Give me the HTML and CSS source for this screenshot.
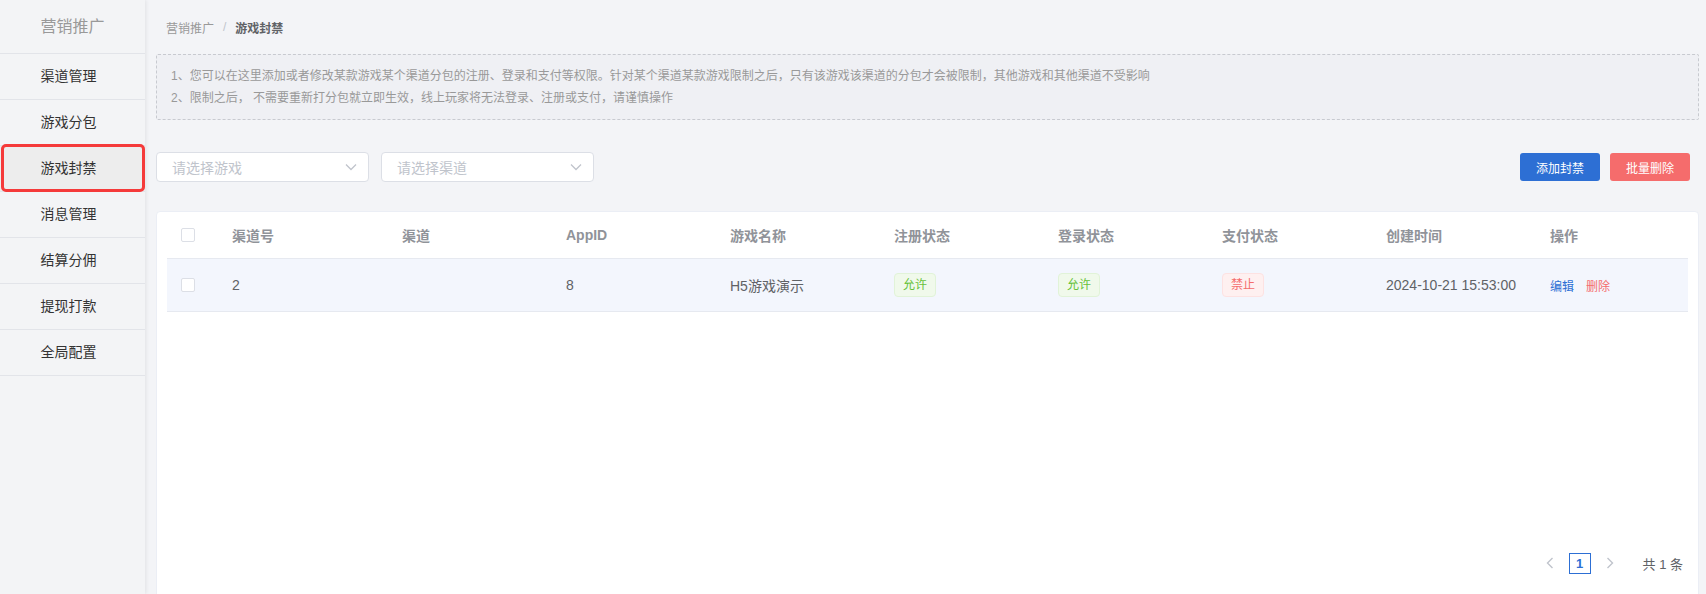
FILE: index.html
```html
<!DOCTYPE html>
<html lang="zh-CN">
<head>
<meta charset="utf-8">
<title>游戏封禁</title>
<link rel="stylesheet" href="styles.css">
</head>
<body>
<div class="layout">
  <aside class="sidebar">
    <div class="sidebar-title">营销推广</div>
    <div class="nav-item">渠道管理</div>
    <div class="nav-item">游戏分包</div>
    <div class="nav-item active">游戏封禁</div>
    <div class="nav-item">消息管理</div>
    <div class="nav-item">结算分佣</div>
    <div class="nav-item">提现打款</div>
    <div class="nav-item">全局配置</div>
    <div class="highlight-box"></div>
  </aside>
  <main class="main">
    <div class="breadcrumb">
      <span class="crumb">营销推广</span>
      <span class="crumb-sep">/</span>
      <span class="crumb current">游戏封禁</span>
    </div>
    <div class="notice">
      <p>1、您可以在这里添加或者修改某款游戏某个渠道分包的注册、登录和支付等权限。针对某个渠道某款游戏限制之后，只有该游戏该渠道的分包才会被限制，其他游戏和其他渠道不受影响</p>
      <p>2、限制之后， 不需要重新打分包就立即生效，线上玩家将无法登录、注册或支付，请谨慎操作</p>
    </div>
    <div class="toolbar">
      <div class="filters">
        <div class="select">
          <span class="placeholder">请选择游戏</span>
          <svg class="chevron" width="12" height="8" viewBox="0 0 12 8"><polyline points="1,1.5 6,6.5 11,1.5" fill="none" stroke="#c0c4cc" stroke-width="1.3"/></svg>
        </div>
        <div class="select">
          <span class="placeholder">请选择渠道</span>
          <svg class="chevron" width="12" height="8" viewBox="0 0 12 8"><polyline points="1,1.5 6,6.5 11,1.5" fill="none" stroke="#c0c4cc" stroke-width="1.3"/></svg>
        </div>
      </div>
      <div class="actions">
        <button class="btn btn-primary">添加封禁</button>
        <button class="btn btn-danger">批量删除</button>
      </div>
    </div>
    <section class="card">
      <div class="table">
        <div class="tr thead">
          <div class="td"><span class="checkbox"></span></div>
          <div class="td">渠道号</div>
          <div class="td">渠道</div>
          <div class="td">AppID</div>
          <div class="td">游戏名称</div>
          <div class="td">注册状态</div>
          <div class="td">登录状态</div>
          <div class="td">支付状态</div>
          <div class="td">创建时间</div>
          <div class="td">操作</div>
        </div>
        <div class="tr tbody-row">
          <div class="td"><span class="checkbox"></span></div>
          <div class="td">2</div>
          <div class="td"></div>
          <div class="td">8</div>
          <div class="td">H5游戏演示</div>
          <div class="td"><span class="tag tag-success">允许</span></div>
          <div class="td"><span class="tag tag-success">允许</span></div>
          <div class="td"><span class="tag tag-danger">禁止</span></div>
          <div class="td">2024-10-21 15:53:00</div>
          <div class="td ops"><a class="link link-edit">编辑</a><a class="link link-del">删除</a></div>
        </div>
      </div>
      <div class="pagination">
        <span class="page-nav">
          <svg width="8" height="12" viewBox="0 0 8 12"><polyline points="6.5,1 1.5,6 6.5,11" fill="none" stroke="#c0c4cc" stroke-width="1.4"/></svg>
        </span>
        <span class="page-num">1</span>
        <span class="page-nav">
          <svg width="8" height="12" viewBox="0 0 8 12"><polyline points="1.5,1 6.5,6 1.5,11" fill="none" stroke="#c0c4cc" stroke-width="1.4"/></svg>
        </span>
        <span class="page-total">共 1 条</span>
      </div>
    </section>
  </main>
</div>
</body>
</html>
```

FILE: styles.css
```css
* { box-sizing: border-box; }

html, body {
  margin: 0;
  padding: 0;
  height: 594px;
  overflow: hidden;
  font-family: "Liberation Sans", "Noto Sans CJK SC", sans-serif;
  background: #f3f4f7;
}

.layout {
  display: flex;
  height: 594px;
}

/* Sidebar */
.sidebar {
  position: relative;
  width: 145px;
  flex: none;
  background: #f3f4f6;
  box-shadow: 1px 0 4px rgba(0, 0, 0, 0.08);
  z-index: 2;
}

.sidebar-title {
  height: 54px;
  line-height: 53px;
  border-bottom: 1px solid #e2e4e9;
  font-size: 16px;
  color: #999;
  text-align: center;
}

.nav-item {
  height: 46px;
  line-height: 45px;
  border-bottom: 1px solid #e2e4e9;
  font-size: 14px;
  color: #333;
  text-align: center;
  padding-right: 8px;
}

.nav-item.active {
  background: #ededed;
}

.highlight-box {
  position: absolute;
  left: 1px;
  top: 144px;
  width: 144px;
  height: 48px;
  border: 3px solid #f53a3a;
  border-radius: 5px;
}

/* Main */
.main {
  flex: 1;
  display: flex;
  flex-direction: column;
  padding: 0 7px 0 11px;
  min-width: 0;
}

.main > * {
  flex-shrink: 0;
}

.breadcrumb {
  height: 54px;
  display: flex;
  align-items: center;
  padding-left: 10px;
  font-size: 12px;
}

.crumb { color: #999; }
.crumb.current { color: #606266; font-weight: bold; }
.crumb-sep { color: #c0c4cc; margin: 0 9px; }

.notice {
  border: 1px dashed #c8cad0;
  background: #eff0f4;
  padding: 10px 14px;
  border-radius: 2px;
}

.notice p {
  margin: 0;
  font-size: 12px;
  line-height: 22px;
  color: #999;
}

.toolbar {
  margin-top: 32px;
  height: 30px;
  display: flex;
  justify-content: space-between;
  align-items: center;
  padding-right: 9px;
}

.filters {
  display: flex;
  gap: 12px;
}

.select {
  width: 213px;
  height: 30px;
  background: #fff;
  border: 1px solid #dcdfe6;
  border-radius: 4px;
  display: flex;
  align-items: center;
  justify-content: space-between;
  padding: 0 11px 0 15px;
}

.placeholder {
  font-size: 14px;
  color: #c0c4cc;
}

.chevron { display: block; }

.actions {
  display: flex;
  gap: 10px;
}

.btn {
  width: 80px;
  height: 28px;
  border: none;
  border-radius: 3px;
  color: #fff;
  font-size: 12px;
  font-family: inherit;
  padding: 0;
}

.btn-primary { background: #2d6fd4; }
.btn-danger { background: #f56c6c; }

/* Card & table */
.card {
  margin-top: 29px;
  height: 400px;
  background: #fff;
  border: 1px solid #ebeef5;
  border-radius: 4px;
  padding: 0 10px;
  display: flex;
  flex-direction: column;
}

.tr {
  display: grid;
  grid-template-columns: 51px 170px repeat(7, 164px) 1fr;
  align-items: center;
  border-bottom: 1px solid #e6e9f0;
}

.thead {
  height: 47px;
  font-size: 14px;
  font-weight: bold;
  color: #909399;
}

.tbody-row {
  height: 53px;
  background: #f3f6fd;
  font-size: 14px;
  color: #606266;
}

.td {
  padding-left: 14px;
  white-space: nowrap;
}

.checkbox {
  display: block;
  width: 14px;
  height: 14px;
  border: 1px solid #dcdfe6;
  border-radius: 2px;
  background: #fff;
}

.tag {
  display: inline-block;
  height: 24px;
  line-height: 22px;
  padding: 0 8px;
  font-size: 12px;
  border: 1px solid;
  border-radius: 4px;
}

.tag-success {
  background: #f0f9eb;
  border-color: #e1f3d8;
  color: #67c23a;
}

.tag-danger {
  background: #fef0f0;
  border-color: #fde2e2;
  color: #f56c6c;
}

.ops {
  display: flex;
  gap: 12px;
}

.link {
  font-size: 12px;
  cursor: pointer;
}

.link-edit { color: #2d6fd4; }
.link-del { color: #f56c6c; }

/* Pagination */
.pagination {
  margin-top: auto;
  margin-bottom: 36px;
  display: flex;
  justify-content: flex-end;
  align-items: center;
  padding-right: 5px;
  height: 22px;
}

.page-nav {
  width: 22px;
  height: 22px;
  display: flex;
  align-items: center;
  justify-content: center;
}

.page-num {
  width: 22px;
  height: 21px;
  margin: 0 8px;
  border: 1px solid #2d6fd4;
  color: #2d6fd4;
  font-size: 13px;
  font-weight: bold;
  display: flex;
  align-items: center;
  justify-content: center;
}

.page-total {
  margin-left: 22px;
  font-size: 13px;
  color: #606266;
}
```
